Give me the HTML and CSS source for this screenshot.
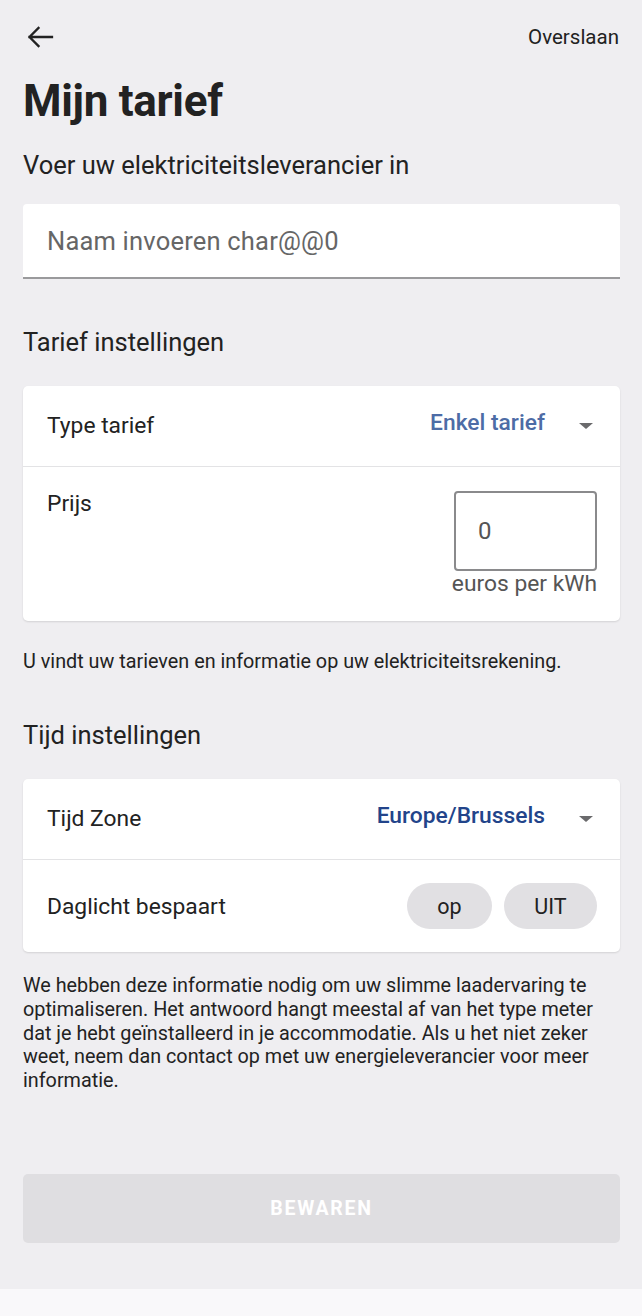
FILE: index.html
```html
<!DOCTYPE html>
<html lang="nl">
<head>
<meta charset="utf-8">
<title>Mijn tarief</title>
<link rel="stylesheet" href="styles.css">
</head>
<body>
<div class="page">
  <header class="topbar">
    <svg class="back" width="28" height="24" viewBox="0 0 28 24" aria-hidden="true">
      <path d="M26 12H3.5M12.5 3L3.5 12l9 9" fill="none" stroke="#222" stroke-width="2.3" stroke-linecap="square"/>
    </svg>
    <span class="skip">Overslaan</span>
  </header>

  <h1 class="title">Mijn tarief</h1>
  <p class="subtitle">Voer uw elektriciteitsleverancier in</p>

  <div class="name-field">
    <span class="placeholder">Naam invoeren char@@0</span>
  </div>

  <h2 class="section">Tarief instellingen</h2>
  <div class="card">
    <div class="row row-select">
      <span class="label">Type tarief</span>
      <span class="select">
        <span class="select-value light">Enkel tarief</span>
        <span class="caret"></span>
      </span>
    </div>
    <div class="row row-price">
      <span class="label">Prijs</span>
      <div class="price">
        <div class="price-box">0</div>
        <span class="unit">euros per kWh</span>
      </div>
    </div>
  </div>
  <p class="note">U vindt uw tarieven en informatie op uw elektriciteitsrekening.</p>

  <h2 class="section section-time">Tijd instellingen</h2>
  <div class="card">
    <div class="row row-select">
      <span class="label">Tijd Zone</span>
      <span class="select">
        <span class="select-value dark">Europe/Brussels</span>
        <span class="caret"></span>
      </span>
    </div>
    <div class="row row-toggle">
      <span class="label">Daglicht bespaart</span>
      <div class="pills">
        <span class="pill pill-op">op</span>
        <span class="pill pill-uit">UIT</span>
      </div>
    </div>
  </div>
  <p class="info">We hebben deze informatie nodig om uw slimme laadervaring te optimaliseren. Het antwoord hangt meestal af van het type meter dat je hebt geïnstalleerd in je accommodatie. Als u het niet zeker weet, neem dan contact op met uw energieleverancier voor meer informatie.</p>

  <button class="save" type="button">BEWAREN</button>
</div>
<div class="bottom-strip"></div>
</body>
</html>
```

FILE: styles.css
```css
* { box-sizing: border-box; }

html, body {
  margin: 0;
  padding: 0;
}

body {
  background: #efeef1;
  font-family: Roboto, "Liberation Sans", Arial, sans-serif;
  color: #222;
  width: 642px;
  height: 1316px;
  overflow: hidden;
}

.page {
  padding: 0 22px 0 23px;
}

.topbar {
  height: 74px;
  display: flex;
  align-items: center;
  justify-content: space-between;
}

.back {
  display: block;
  margin-left: 3px;
}

.skip {
  font-size: 20.5px;
  color: #222;
  margin-right: 1px;
}

.title {
  margin: 0;
  font-size: 44px;
  font-weight: 700;
  line-height: 54px;
  letter-spacing: -0.3px;
}

.subtitle {
  margin: 22px 0 0;
  font-size: 25.5px;
  line-height: 30px;
}

.name-field {
  margin-top: 24px;
  height: 75px;
  background: #fff;
  border-radius: 4px 4px 0 0;
  border-bottom: 2px solid #9a9a9c;
  display: flex;
  align-items: center;
  padding-left: 24px;
}

.placeholder {
  font-size: 25.5px;
  color: #666;
  letter-spacing: 0.2px;
}

.section {
  margin: 48px 0 0;
  font-size: 25.5px;
  font-weight: 400;
  line-height: 30px;
}

.section-time {
  margin-top: 46px;
}

.card {
  margin-top: 29px;
  background: #fff;
  border-radius: 5px;
  box-shadow: 0 1px 2px rgba(0, 0, 0, 0.12);
}

.row {
  display: flex;
  justify-content: space-between;
}

.row + .row {
  border-top: 1px solid #e3e3e5;
}

.label {
  font-size: 22.8px;
  color: #222;
}

.row-select {
  height: 80px;
  align-items: center;
  padding: 0 27px 0 24px;
}

.row-select .label {
  margin-top: -2px;
}

.select {
  display: flex;
  align-items: center;
  gap: 34px;
}

.select-value {
  font-size: 22.8px;
  font-weight: 500;
  margin-top: -7px;
}

.select-value.light { color: #4d6ca6; }
.select-value.dark { color: #22448a; }

.caret {
  width: 0;
  height: 0;
  border-left: 7px solid transparent;
  border-right: 7px solid transparent;
  border-top: 6px solid #6a6a6c;
}

.row-price {
  align-items: flex-start;
  padding: 24px 23px 24px 24px;
}

.row-price .label {
  line-height: 26px;
}

.price {
  display: flex;
  flex-direction: column;
  align-items: flex-end;
}

.price-box {
  width: 143px;
  height: 80px;
  border: 2px solid #8a8a8c;
  border-radius: 4px;
  display: flex;
  align-items: center;
  padding-left: 22px;
  font-size: 24px;
  color: #555;
}

.unit {
  font-size: 22.8px;
  line-height: 26px;
  color: #555;
}

.note {
  margin: 29px 0 0;
  font-size: 19.8px;
  line-height: 24px;
}

.row-toggle {
  height: 93px;
  align-items: center;
  padding: 0 23px 0 24px;
}

.pills {
  display: flex;
  gap: 12px;
}

.pill {
  height: 46px;
  border-radius: 23px;
  background: #e1e0e3;
  display: flex;
  align-items: center;
  justify-content: center;
  font-size: 21.5px;
  color: #222;
}

.pill-op { width: 85px; }
.pill-uit { width: 93px; }

.info {
  margin: 22px 0 0;
  font-size: 19.8px;
  line-height: 23.75px;
}

.save {
  display: block;
  margin-top: 81px;
  width: 100%;
  height: 69px;
  border: 0;
  border-radius: 5px;
  background: #dfdee1;
  color: #fff;
  font-family: Roboto, "Liberation Sans", Arial, sans-serif;
  font-size: 19.5px;
  font-weight: 700;
  letter-spacing: 1.7px;
  padding: 0;
}

.bottom-strip {
  margin-top: 46px;
  height: 27px;
  background: #f9f8fa;
}
```
